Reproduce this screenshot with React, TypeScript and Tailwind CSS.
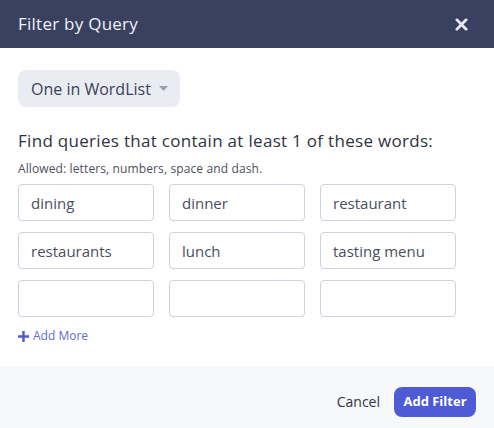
import React from "react";

const words = ["dining", "dinner", "restaurant", "restaurants", "lunch", "tasting menu", "", "", ""];

export default function App() {
  return (
    <div className="w-[494px] h-[428px] flex flex-col bg-white" style={{ fontFamily: "'Open Sans', 'Noto Sans', sans-serif" }}>
      <div className="h-[48px] bg-[#3a4160] flex items-center justify-between pl-[18px] pr-[26px]">
        <span className="text-[17px] leading-[24px] tracking-[0.25px] text-[#f0f1f5]">Filter by Query</span>
        <svg width="13" height="13" viewBox="0 0 14 14">
          <path d="M2 2 L12 12 M12 2 L2 12" stroke="#e6e8ee" strokeWidth="3" strokeLinecap="round" />
        </svg>
      </div>
      <div className="flex-1 px-[18px] pt-[22px]">
        <button className="h-[37px] w-[162px] rounded-[8px] bg-[#e9ecf2] flex items-center pl-[13px] gap-[8px] text-[16px] leading-[22px] text-[#3c4257]">
          One in WordList
          <svg width="9" height="5" viewBox="0 0 9 5"><path d="M0 0 L9 0 L4.5 5 Z" fill="#9aa0ab" /></svg>
        </button>
        <div className="mt-[22px] text-[17px] tracking-[0.3px] text-[#2f3340] leading-[24px]">Find queries that contain at least 1 of these words:</div>
        <div className="mt-[8px] text-[12px] tracking-[0.12px] text-[#4a4f5c] leading-[15px]">Allowed: letters, numbers, space and dash.</div>
        <div className="mt-[8px] grid grid-cols-[136px_136px_136px] gap-x-[15px] gap-y-[11px]">
          {words.map((w, i) => (
            <input
              key={i}
              defaultValue={w}
              className="h-[37px] w-[136px] rounded-[4px] border border-[#ccd2de] px-[12px] text-[15px] text-[#4a4f5c] outline-none"
            />
          ))}
        </div>
        <div className="mt-[10px] flex items-center gap-[4px] text-[12px] text-[#5d6bd9]">
          <svg width="11" height="11" viewBox="0 0 11 11"><path d="M5.5 0 V11 M0 5.5 H11" stroke="#4f5bd5" strokeWidth="2.4" /></svg>
          Add More
        </div>
      </div>
      <div className="h-[62px] bg-[#f7f8fa] flex items-start justify-end pr-[18px] pt-[21px] gap-[14px]">
        <span className="text-[14px] leading-[30px] text-[#2f3340]">Cancel</span>
        <button className="h-[30px] w-[82px] rounded-[8px] bg-[#4f5bd5] text-white text-[13px] font-bold">Add Filter</button>
      </div>
    </div>
  );
}
